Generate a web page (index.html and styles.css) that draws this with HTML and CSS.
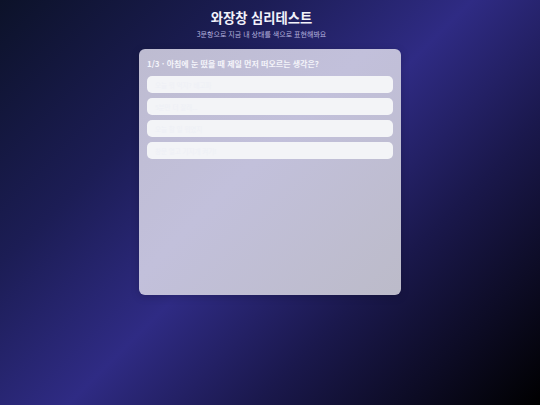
FILE: index.html
```html
<!DOCTYPE html>
<html lang="ko">
<head>
<meta charset="utf-8">
<link rel="stylesheet" href="styles.css">
</head>
<body>
<main class="page">
  <header class="header">
    <h1 class="title">와장창 심리테스트</h1>
    <p class="subtitle">3문항으로 지금 내 상태를 색으로 표현해봐요</p>
  </header>
  <section class="card">
    <p class="question">1/3 · 아침에 눈 떴을 때 제일 먼저 떠오르는 생각은?</p>
    <div class="options">
      <button class="option">오늘 뭐 먹지? 배고파</button>
      <button class="option">5분만 더 잘래...</button>
      <button class="option">오늘 할 일 뭐였지</button>
      <button class="option">창문 열고 기지개 켜기!</button>
    </div>
  </section>
</main>
</body>
</html>
```

FILE: styles.css
```css
* { box-sizing: border-box; }
html, body { margin: 0; height: 100%; }
body {
  width: 540px;
  height: 405px;
  overflow: hidden;
  font-family: "Noto Sans CJK KR", "Noto Sans", sans-serif;
  background: linear-gradient(135deg, #0c1229 0%, #1c1d55 28%, #2f2b84 50%, #1a184c 70%, #000000 100%);
}
.page {
  display: flex;
  flex-direction: column;
  align-items: center;
  padding-top: 9px;
}
.header {
  display: flex;
  flex-direction: column;
  align-items: center;
  padding-right: 17px;
}
.title {
  margin: 0;
  font-size: 13.3px;
  line-height: 18px;
  font-weight: 700;
  color: #f2f2fa;
}
.subtitle {
  margin: 2.5px 0 0;
  font-size: 7px;
  line-height: 9px;
  color: #b3b0dc;
}
.card {
  margin-top: 10.5px;
  width: 262px;
  height: 246px;
  padding: 10px 8px;
  border-radius: 6px;
  background: linear-gradient(135deg, #bebcd1 0%, #c2c0db 45%, #bcbbc9 100%);
  box-shadow: 0 2px 8px rgba(0,0,0,0.18);
}
.question {
  margin: 0;
  font-size: 8px;
  line-height: 9px;
  font-weight: 700;
  color: #f4f4fa;
}
.options {
  display: flex;
  flex-direction: column;
  gap: 5px;
  margin-top: 8px;
}
.option {
  display: block;
  width: 100%;
  height: 17px;
  padding: 0 8px;
  border: none;
  border-radius: 5px;
  background: #f3f4f7;
  font-family: inherit;
  font-size: 6.5px;
  text-align: left;
  color: #eef0f6;
}
```
